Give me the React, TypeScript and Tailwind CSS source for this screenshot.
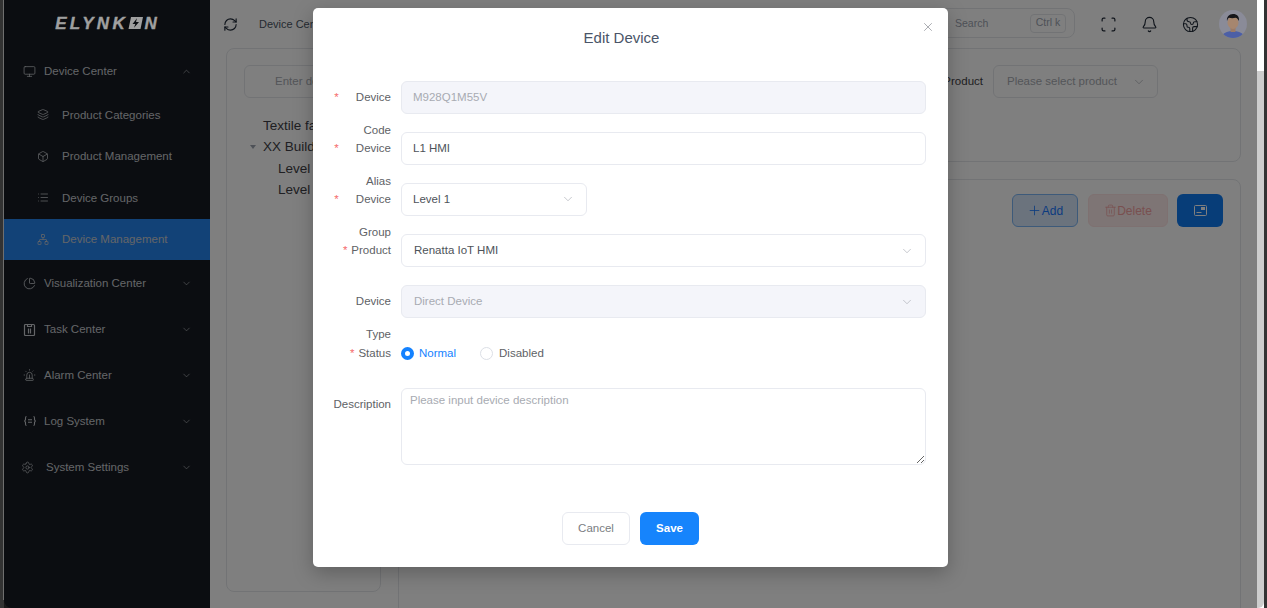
import React from "react";
import {
  Monitor, Layers, Box, List, Network, ChartPie, Siren, Settings, ChevronDown, ChevronUp,
  RefreshCw, Bell, Earth, Scan, Plus, Trash2, X,
} from "lucide-react";

const font = { fontFamily: "'Liberation Sans', Arial, sans-serif" };

function TaskIcon() {
  return (
    <svg width="13" height="13" viewBox="0 0 13 13" fill="none" stroke="currentColor" strokeWidth="1.2">
      <rect x="1.5" y="1.5" width="10" height="11" rx="1" />
      <path d="M4.5 1v2.5h4V1M5.5 5.5v5M7.5 5.5v5" />
    </svg>
  );
}
function LogIcon() {
  return (
    <svg width="12" height="12" viewBox="0 0 12 12" fill="none" stroke="currentColor" strokeWidth="1.1">
      <path d="M2.5 1.5c-1 0-1 .7-1 1.5v1.5L.7 6l.8 1.500V9c0 .8 0 1.500 1 1.500M9.500 1.500c1 0 1 .7 1 1.500v1.500l.8 1.500-.8 1.500V9c0 .8 0 1.500-1 1.500M4 4.700h4M4 7.300h4" />
    </svg>
  );
}

function Group({ icon, label, open, pad = "pl-[19px]", gap = "gap-[8px]" }: { icon: React.ReactNode; label: string; open?: boolean; pad?: string; gap?: string }) {
  return (
    <div className={`h-[46px] flex items-center pr-[18px] text-[11.500px] text-[#c8cbd0] ${pad} ${gap}`}>
      <span className="w-[13px] flex justify-center">{icon}</span>
      <span className="flex-1 pt-[1px]">{label}</span>
      {open ? <ChevronUp size={11} strokeWidth={1.3} /> : <ChevronDown size={11} strokeWidth={1.3} />}
    </div>
  );
}

function Sub({ icon, label, active }: { icon: React.ReactNode; label: string; active?: boolean }) {
  return (
    <div className={`h-[41.500px] flex items-center gap-[13px] pl-[33px] text-[11.500px] text-[#c8cbd0] ${active ? "bg-[#2585ef]" : ""}`}>
      <span className="w-[12px] flex justify-center">{icon}</span>
      <span className="pt-[1px]">{label}</span>
    </div>
  );
}

function Logo() {
  return (
    <div className="relative z-20 h-[48px] flex items-center justify-center text-[#a0a0a0] pr-[2px] pb-[2px]">
      <span className="text-[17px] leading-none font-bold italic tracking-[3.300px] [-webkit-text-stroke:0.4px_#a0a0a0]">ELYNK</span>
      <svg width="15" height="12" viewBox="0 0 15 12" className="mr-[1.500px]">
        <path fillRule="evenodd" d="M3 0h12l-2.500 12H0.500zM9 1.200 4.500 7h2.800L6 10.800 11 5H8z" fill="currentColor" />
      </svg>
      <span className="text-[17px] leading-none font-bold italic [-webkit-text-stroke:0.4px_#a0a0a0]">N</span>
    </div>
  );
}

function Sidebar() {
  return (
    <aside className="w-[206px] shrink-0 bg-[#161a22] rounded-bl-[8px]">
      <Logo />
      <Group icon={<Monitor size={13} strokeWidth={1.4} />} label="Device Center" open />
      <Sub icon={<Layers size={13} strokeWidth={1.5} />} label="Product Categories" />
      <Sub icon={<Box size={13} strokeWidth={1.5} />} label="Product Management" />
      <Sub icon={<List size={13} strokeWidth={1.5} />} label="Device Groups" />
      <Sub icon={<Network size={13} strokeWidth={1.5} />} label="Device Management" active />
      <Group icon={<ChartPie size={13} strokeWidth={1.5} />} label="Visualization Center" />
      <Group icon={<TaskIcon />} label="Task Center" />
      <Group icon={<Siren size={14} strokeWidth={1.4} />} label="Alarm Center" />
      <Group icon={<LogIcon />} label="Log System" />
      <Group icon={<Settings size={13} strokeWidth={1.3} />} label="System Settings" pad="pl-[17px]" gap="gap-[12px]" />
    </aside>
  );
}

function Avatar() {
  return (
    <svg width="28" height="28" viewBox="0 0 28 28" className="relative z-20">
      <defs><clipPath id="av"><circle cx="14" cy="14" r="14" /></clipPath></defs>
      <g clipPath="url(#av)">
        <rect width="28" height="28" fill="#8a8b98" />
        <path d="M3 28c0-5 5-7 11-7s11 2 11 7z" fill="#4c5fa6" />
        <rect x="11.500" y="16" width="5" height="6" fill="#9a7a66" />
        <ellipse cx="14" cy="12.500" rx="5.500" ry="6.500" fill="#a6866f" />
        <path d="M8 11c-.5-4 2-7 6-7s6.500 2.500 6 7c-1-2-2-3-3.500-3.200-2 .5-5 .4-6.500 0C9 8.500 8.500 9.500 8 11z" fill="#15151a" />
      </g>
    </svg>
  );
}

function Header() {
  return (
    <header className="h-[48px] flex items-center text-[11px] text-[#4b5563] pl-[13px] pr-[10px]">
      <RefreshCw size={15} strokeWidth={1.8} className="text-[#1f2937]" />
      <span className="ml-[21px] flex-1 whitespace-nowrap">Device Center</span>
      <div className="w-[190px] h-[30px] border border-[#e5e7eb] rounded-[8px] flex items-center justify-between pl-[69px] pr-[8px] text-[#9ca3af] text-[10.500px] -mt-[2px]">
        <span className="mt-[1px]">Search</span>
        <span className="border border-[#e5e7eb] rounded-[4px] w-[36px] h-[19px] flex items-center justify-center">Ctrl k</span>
      </div>
      <Scan size={17} strokeWidth={1.7} className="ml-[25px] text-[#1f2937]" />
      <Bell size={17} strokeWidth={1.6} className="ml-[24px] text-[#1f2937]" />
      <Earth size={17} strokeWidth={1.5} className="ml-[24px] text-[#1f2937]" />
      <div className="ml-[20px]"><Avatar /></div>
    </header>
  );
}

function Background() {
  return (
    <main className="flex-1 min-w-0 bg-white overflow-hidden flex flex-col">
      <Header />
      <div className="flex gap-[17px] pl-[16px] pr-[16px] h-[544px]">
        <section className="w-[155px] h-[544px] shrink-0 border border-[#e5e7eb] rounded-[8px] pt-[16px] px-[17px] text-[13.500px] text-[#3f3f46]">
          <div className="w-[220px] h-[33px] border border-[#e5e7eb] rounded-[6px] pl-[30px] flex items-center text-[11.500px] text-[#a8abb2] whitespace-nowrap">Enter device</div>
          <div className="mt-[17px] pl-[19px] leading-[21.300px] whitespace-nowrap">
            <div>Textile factory</div>
            <div className="flex items-center -ml-[13px]"><span className="w-0 h-0 border-x-[3px] border-t-[4px] border-x-transparent border-t-[#9ca3af] mr-[7px]" />XX Building</div>
            <div className="pl-[15px]">Level 1</div>
            <div className="pl-[15px]">Level 2</div>
          </div>
        </section>
        <div className="flex-1 flex flex-col gap-[17px]">
          <section className="h-[114px] shrink-0 border border-[#e5e7eb] rounded-[8px] pt-[16px] pr-[82px] flex justify-end items-start text-[11.500px] text-[#3f3f46]">
            <span className="leading-[33px] mr-[10px]">Product</span>
            <div className="w-[165px] h-[33px] border border-[#e5e7eb] rounded-[6px] flex items-center justify-between pl-[13px] pr-[11px] text-[#a8abb2] whitespace-nowrap">
              <span>Please select product</span>
              <ChevronDown size={14} strokeWidth={1.2} />
            </div>
          </section>
          <section className="h-[500px] shrink-0 border border-[#e5e7eb] rounded-[8px] pt-[14px] pr-[17px] flex justify-end items-start gap-[10px] text-[12px]">
            <div className="w-[66px] h-[33px] border border-[#7ab5f5] bg-[#d6e6fb] rounded-[6px] flex items-center justify-center text-[#1677ff]"><Plus size={15} strokeWidth={1.3} />Add</div>
            <div className="w-[80px] h-[33px] border border-[#fde2e2] bg-[#fdeaea] rounded-[6px] flex items-center justify-center text-[#f2a0a0]"><Trash2 size={13} strokeWidth={1.3} />Delete</div>
            <div className="w-[46px] h-[33px] -ml-[1px] bg-[#0f7bf0] rounded-[6px] flex items-center justify-center text-white">
              <svg width="13" height="11" viewBox="0 0 13 11" fill="none" stroke="currentColor"><rect x=".5" y=".5" width="12" height="10" rx="1" /><rect x="7.500" y="2.500" width="3" height="2" fill="currentColor" /><path d="M2.500 7.500h5" /></svg>
            </div>
          </section>
        </div>
      </div>
    </main>
  );
}

function FormLabel({ first, second, star, line = "leading-[33px]" }: { first: string; second?: string; star?: string; line?: string }) {
  return (
    <div className="w-[78px] h-[32.500px] text-right text-[#606266] shrink-0">
      <div className={`flex justify-end ${line}`}>
        {star ? <span className={`text-[#f56c6c] ${star}`}>*</span> : null}
        <span>{first}</span>
      </div>
      {second ? <div className="leading-[33px]">{second}</div> : null}
    </div>
  );
}

function Row({ children, label }: { children: React.ReactNode; label: React.ReactNode }) {
  return (
    <div className="flex h-[32.500px] gap-[10px]">
      {label}
      <div className="flex-1 min-w-0">{children}</div>
    </div>
  );
}

function Field({ text, disabled, chevron, wide = true, value }: { text: string; disabled?: boolean; chevron?: boolean; wide?: boolean; value?: boolean }) {
  return (
    <div className={`h-[32.500px] border border-[#e8eaf0] rounded-[6px] flex items-center justify-between ${value ? "pl-[11px]" : "pl-[12px]"} pr-[11px] ${wide ? "w-full" : "w-[186px]"} ${disabled ? "bg-[#f4f5fa] text-[#a8abb2]" : "bg-white text-[#4e5359]"}`}>
      <span>{text}</span>
      {chevron ? <ChevronDown size={14} strokeWidth={1.1} className="text-[#a8abb2]" /> : null}
    </div>
  );
}

function Modal() {
  return (
    <div className="w-[635px] h-[559px] mt-[8px] bg-white rounded-[5px] shadow-[0_6px_20px_rgba(0,0,0,0.25)] text-[11.500px] flex flex-col pr-[22px]">
      <div className="h-[73px] grid grid-cols-[1fr_auto_1fr] pt-[20px] -mr-[22px]">
        <span />
        <span className="text-[15px] leading-[20px] text-[#4a5568] mr-[18px]">Edit Device</span>
        <span className="justify-self-end mr-[13px] -mt-[8px] text-[#909399]"><X size={14} strokeWidth={1.3} /></span>
      </div>
      <div className="flex flex-col gap-[18.600px]">
        <Row label={<FormLabel first="Device" second="Code" star="mr-[17px]" />}><Field text="M928Q1M55V" disabled value /></Row>
        <Row label={<FormLabel first="Device" second="Alias" star="mr-[17px]" />}><Field text="L1 HMI" value /></Row>
        <Row label={<FormLabel first="Device" second="Group" star="mr-[17px]" />}><Field text="Level 1" chevron wide={false} value /></Row>
        <Row label={<FormLabel first="Product" star="mr-[4px]" />}><Field text="Renatta IoT HMI" chevron /></Row>
        <Row label={<FormLabel first="Device" second="Type" />}><Field text="Direct Device" chevron disabled /></Row>
        <Row label={<FormLabel first="Status" star="mr-[4px]" line="leading-[35px]" />}>
          <div className="h-[32.500px] flex items-center pt-[1px]">
            <span className="w-[13px] h-[13px] rounded-full border-[4px] border-[#1482ff] bg-white" />
            <span className="ml-[5px] text-[#1482ff]">Normal</span>
            <span className="ml-[24px] w-[13px] h-[13px] rounded-full border border-[#dcdfe6] bg-white" />
            <span className="ml-[6px] text-[#606266]">Disabled</span>
          </div>
        </Row>
        <div className="flex gap-[10px]">
          <div className="w-[78px] pt-[3px] text-right leading-[26px] text-[#606266] shrink-0">Description</div>
          <textarea
            readOnly
            placeholder="Please input device description"
            className="flex-1 h-[77.500px] border border-[#e8eaf0] rounded-[6px] px-[8px] py-[3px] leading-[16px] text-[11.500px] text-[#606266] placeholder:text-[#a8abb2] outline-none"
            style={font}
          />
        </div>
      </div>
      <div className="flex justify-center gap-[10px] mt-[47px] -mr-[22px]">
        <div className="w-[68px] h-[33px] border border-[#e8eaf0] rounded-[6px] flex items-center justify-center text-[#7a7d82]">Cancel</div>
        <div className="w-[59px] h-[33px] bg-[#1684fc] rounded-[6px] flex items-center justify-center text-white font-bold">Save</div>
      </div>
    </div>
  );
}

export default function App() {
  return (
    <div className="w-[1267px] h-[608px] flex bg-[#333333] overflow-hidden" style={font}>
      <div className="w-[4px] shrink-0 flex justify-end"><div className="w-[1px] h-[600px] bg-[#6f6f6f]" /></div>
      <div className="relative flex flex-1 min-w-0">
        <Sidebar />
        <Background />
        <div className="absolute inset-0 z-10 bg-black/50 flex justify-center items-start">
          <Modal />
        </div>
      </div>
      <div className="w-[7px] shrink-0 flex flex-col bg-white">
        <div className="h-[71px]" />
        <div className="flex-1 bg-[#cdcdcd] rounded-br-[6px]" />
      </div>
      <div className="w-[3px] shrink-0" />
    </div>
  );
}
